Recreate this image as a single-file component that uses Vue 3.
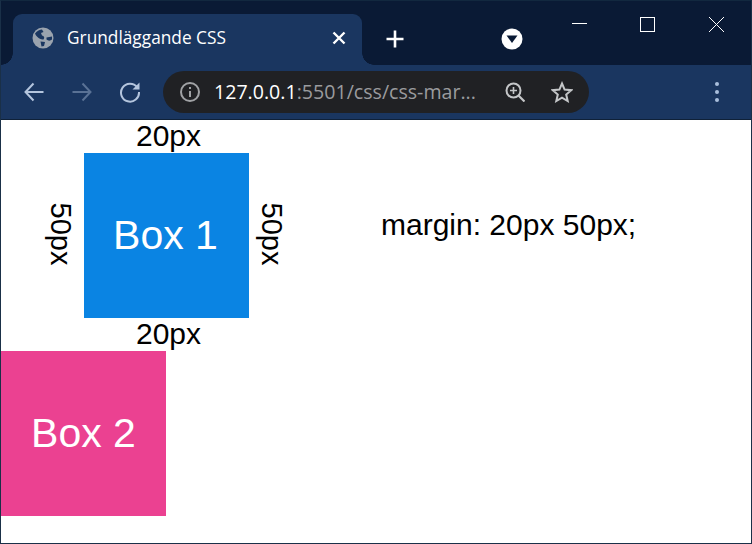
<template>
  <div class="window">
    <!-- 标签栏 -->
    <div class="tabstrip">
      <div class="tab">
        <svg class="favicon" width="22" height="22" viewBox="0 0 22 22">
          <circle cx="11" cy="11" r="10.5" fill="#9aa3ae" />
          <path d="M3 6.5 C5 4 8 2.5 10 2.5 L11.5 5 L9 6 L10 8.5 C12 9 13 10.5 11.5 12.5 C9.5 13 7 11.5 5.5 10 C4.5 9 3.5 8 3 6.5 Z" fill="#1a3660" />
          <path d="M8.5 14.5 L13 15 L12 19 L9.5 19.5 Z M14.5 10.5 L20 9.5 L20 12.5 C18.5 14 16 14 14.5 12.5 Z" fill="#1a3660" />
        </svg>
        <span class="tab-title">Grundläggande CSS</span>
        <svg class="tab-close" width="14" height="14" viewBox="0 0 14 14">
          <path d="M1.5 1.5 L12.5 12.5 M12.5 1.5 L1.5 12.5" stroke="#fff" stroke-width="2.4" />
        </svg>
      </div>
      <svg class="new-tab" width="18" height="18" viewBox="0 0 18 18">
        <path d="M9 0.5 V17.5 M0.5 9 H17.5" stroke="#fff" stroke-width="2.6" />
      </svg>
      <svg class="profile" width="22" height="22" viewBox="0 0 22 22">
        <circle cx="11" cy="11" r="10.5" fill="#fff" />
        <path d="M5.5 7.5 H16.5 L11 15 Z" fill="#0a1a35" />
      </svg>
      <div class="caption">
        <svg width="46" height="46" viewBox="0 0 46 46"><path d="M17 22.5 H32" stroke="#fff" stroke-width="1" /></svg>
        <svg width="46" height="46" viewBox="0 0 46 46"><rect x="16.5" y="16.5" width="14" height="14" fill="none" stroke="#fff" stroke-width="1" /></svg>
        <svg width="46" height="46" viewBox="0 0 46 46"><path d="M16 16 L31 31 M31 16 L16 31" stroke="#fff" stroke-width="1" /></svg>
      </div>
    </div>

    <!-- 工具栏 -->
    <div class="toolbar">
      <svg class="nav" width="22" height="22" viewBox="0 0 22 22">
        <path d="M20.5 11 H2.5 M10.5 2.5 L2.5 11 L10.5 19.5" fill="none" stroke="#b4c5dd" stroke-width="2" />
      </svg>
      <svg class="nav" width="22" height="22" viewBox="0 0 22 22">
        <path d="M1.5 11 H19.5 M11.5 2.5 L19.5 11 L11.5 19.5" fill="none" stroke="#5a7295" stroke-width="2" />
      </svg>
      <svg class="nav" width="22" height="22" viewBox="0 0 22 22">
        <path d="M18.2 6.2 A9 9 0 1 0 20 11" fill="none" stroke="#b4c5dd" stroke-width="2" />
        <path d="M20.5 1.5 V8.5 H13.5 Z" fill="#b4c5dd" />
      </svg>
      <div class="omnibox">
        <svg width="20" height="20" viewBox="0 0 20 20">
          <circle cx="10" cy="10" r="9" fill="none" stroke="#a0a2a5" stroke-width="2" />
          <path d="M10 9 V15 M10 5 V7" stroke="#a0a2a5" stroke-width="2" />
        </svg>
        <span class="url"><span class="host">127.0.0.1</span>:5501/css/css-mar...</span>
        <svg class="zoom-icon" width="20" height="20" viewBox="0 0 20 20">
          <circle cx="8.5" cy="8.5" r="7" fill="none" stroke="#c4c6c8" stroke-width="2" />
          <path d="M13.5 13.5 L19.5 19.5" stroke="#c4c6c8" stroke-width="2.2" />
          <path d="M8.5 5 V12 M5 8.5 H12" stroke="#c4c6c8" stroke-width="1.6" />
        </svg>
        <svg class="star" width="22" height="22" viewBox="0 0 22 22">
          <path d="M11 2.5 L13.6 8.6 L20.2 9.2 L15.2 13.5 L16.7 20 L11 16.6 L5.3 20 L6.8 13.5 L1.8 9.2 L8.4 8.6 Z" fill="none" stroke="#c4c6c8" stroke-width="2" />
        </svg>
      </div>
      <div class="menu">
        <i></i><i></i><i></i>
      </div>
    </div>

    <!-- 页面内容 -->
    <div class="page">
      <div class="row">
        <div class="box box-1">
          <span class="box-text">Box 1</span>
          <span class="label top">20px</span>
          <span class="label bottom">20px</span>
          <span class="label side left">50px</span>
          <span class="label side right">50px</span>
        </div>
        <div class="rule">margin: 20px 50px;</div>
      </div>
      <div class="box box-2">Box 2</div>
    </div>
  </div>
</template>

<script setup>
</script>

<style>
html, body {
  margin: 0;
  background: #fff;
}
</style>

<style scoped>
.window {
  width: 752px;
  height: 544px;
  box-sizing: border-box;
  border: 1px solid #1a3048;
  border-top-color: #12283f;
  overflow: hidden;
  background: #fff;
  font-family: "Liberation Sans", Arial, sans-serif;
}

.tabstrip {
  display: flex;
  align-items: flex-start;
  height: 64px;
  background: #0a1a35;
}

.tab {
  position: relative;
  display: flex;
  align-items: center;
  box-sizing: border-box;
  width: 349px;
  height: 51px;
  margin: 13px 0 0 12px;
  padding: 0 16px 4px 19px;
  background: #1a3660;
  border-radius: 9px 9px 0 0;
}

.tab::before,
.tab::after {
  content: "";
  position: absolute;
  bottom: 0;
  width: 12px;
  height: 12px;
}

.tab::before {
  left: -12px;
  background: radial-gradient(circle at 0 0, #0a1a35 11.5px, #1a3660 12px);
}

.tab::after {
  right: -12px;
  background: radial-gradient(circle at 100% 0, #0a1a35 11.5px, #1a3660 12px);
}

.tab-title {
  flex: 1;
  margin-left: 13px;
  color: #fff;
  font-family: "Open Sans", "Noto Sans", sans-serif;
  font-size: 17.3px;
  white-space: nowrap;
}

.new-tab {
  margin: 29px 0 0 24px;
}

.profile {
  margin: 27px 0 0 97px;
}

.caption {
  display: flex;
  gap: 23px;
  margin-left: 32px;
}

.toolbar {
  display: flex;
  align-items: center;
  box-sizing: border-box;
  height: 55px;
  padding: 0 0 1px 22px;
  background: #1a3660;
  border-bottom: 1px solid #0f2138;
}

.nav {
  flex: none;
  margin-right: 26px;
}

.omnibox {
  display: flex;
  align-items: center;
  box-sizing: border-box;
  width: 426px;
  height: 42px;
  margin-left: -4px;
  padding: 0 16px 0 17px;
  background: #202124;
  border-radius: 21px;
}

.url {
  flex: 1;
  margin-left: 14px;
  color: #9a9b9e;
  font-family: "Open Sans", "Noto Sans", sans-serif;
  font-size: 19.6px;
  white-space: nowrap;
  overflow: hidden;
}

.host {
  color: #fff;
}

.star {
  margin-left: 26px;
}

.menu {
  display: flex;
  flex-direction: column;
  gap: 4px;
  margin-left: 126px;
}

.menu i {
  display: block;
  width: 4px;
  height: 4px;
  border-radius: 50%;
  background: #a9bfdc;
}

.page {
  color: #000;
}

.row {
  display: flex;
  align-items: flex-start;
}

.box {
  position: relative;
  display: flex;
  align-items: center;
  justify-content: center;
  flex: none;
  width: 165px;
  height: 165px;
  color: #fff;
  font-size: 41px;
}

.box-text {
  margin-left: -2px;
}

.box-1 {
  margin: 33px 83px;
  background: #0a84e3;
}

.box-2 {
  background: #eb4191;
}

.label {
  position: absolute;
  color: #000;
  font-size: 30px;
  line-height: 32px;
  white-space: nowrap;
}

.top {
  top: -33px;
  left: 52px;
}

.bottom {
  bottom: -32px;
  left: 52px;
}

.side {
  top: 65px;
  font-size: 29px;
  transform: rotate(90deg);
}

.left {
  left: -54px;
}

.right {
  right: -55px;
}

.rule {
  margin: 89px 0 0 49px;
  font-size: 30px;
  line-height: 32px;
  white-space: nowrap;
}
</style>
